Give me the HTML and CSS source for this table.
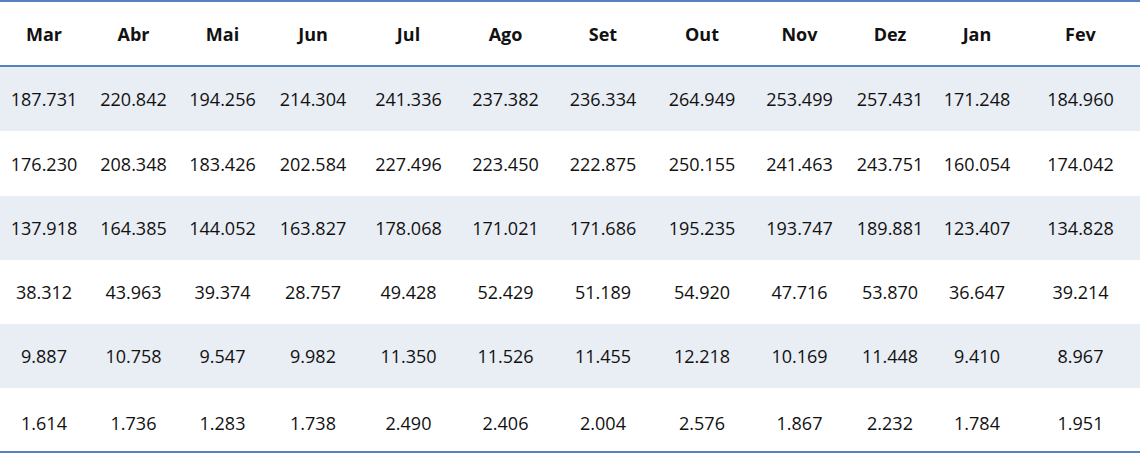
FILE: index.html
```html
<!DOCTYPE html>
<html lang="pt">
<head>
<meta charset="utf-8">
<link rel="stylesheet" href="styles.css">
</head>
<body>
<table class="data">
  <colgroup>
    <col class="c1"><col class="c2"><col class="c3"><col class="c4"><col class="c5"><col class="c6">
    <col class="c7"><col class="c8"><col class="c9"><col class="c10"><col class="c11"><col class="c12">
  </colgroup>
  <thead>
    <tr><th>Mar</th><th>Abr</th><th>Mai</th><th>Jun</th><th>Jul</th><th>Ago</th><th>Set</th><th>Out</th><th>Nov</th><th>Dez</th><th>Jan</th><th>Fev</th></tr>
  </thead>
  <tbody>
    <tr class="band"><td>187.731</td><td>220.842</td><td>194.256</td><td>214.304</td><td>241.336</td><td>237.382</td><td>236.334</td><td>264.949</td><td>253.499</td><td>257.431</td><td>171.248</td><td>184.960</td></tr>
    <tr class="tall"><td>176.230</td><td>208.348</td><td>183.426</td><td>202.584</td><td>227.496</td><td>223.450</td><td>222.875</td><td>250.155</td><td>241.463</td><td>243.751</td><td>160.054</td><td>174.042</td></tr>
    <tr class="band"><td>137.918</td><td>164.385</td><td>144.052</td><td>163.827</td><td>178.068</td><td>171.021</td><td>171.686</td><td>195.235</td><td>193.747</td><td>189.881</td><td>123.407</td><td>134.828</td></tr>
    <tr><td>38.312</td><td>43.963</td><td>39.374</td><td>28.757</td><td>49.428</td><td>52.429</td><td>51.189</td><td>54.920</td><td>47.716</td><td>53.870</td><td>36.647</td><td>39.214</td></tr>
    <tr class="band"><td>9.887</td><td>10.758</td><td>9.547</td><td>9.982</td><td>11.350</td><td>11.526</td><td>11.455</td><td>12.218</td><td>10.169</td><td>11.448</td><td>9.410</td><td>8.967</td></tr>
    <tr class="last"><td>1.614</td><td>1.736</td><td>1.283</td><td>1.738</td><td>2.490</td><td>2.406</td><td>2.004</td><td>2.576</td><td>1.867</td><td>2.232</td><td>1.784</td><td>1.951</td></tr>
  </tbody>
</table>
</body>
</html>
```
FILE: styles.css
```css
html, body {
  margin: 0;
  padding: 0;
  background: #ffffff;
}
.data {
  width: 1140px;
  border-collapse: collapse;
  table-layout: fixed;
  font-family: "Open Sans", "Liberation Sans", sans-serif;
  color: #111111;
  border-top: 2px solid #5683c0;
  border-bottom: 2px solid #5683c0;
}
.c1 { width: 88px; }
.c2 { width: 91px; }
.c3 { width: 87px; }
.c4 { width: 94px; }
.c5 { width: 97px; }
.c6 { width: 97px; }
.c7 { width: 98px; }
.c8 { width: 100px; }
.c9 { width: 95px; }
.c10 { width: 86px; }
.c11 { width: 88px; }
.c12 { width: 119px; }
.data th,
.data td {
  padding: 0;
  text-align: center;
  white-space: nowrap;
}
.data th {
  height: 63px;
  font-size: 18px;
  font-weight: 700;
  border-bottom: 2px solid #5683c0;
}
.data td {
  height: 64px;
  font-size: 18px;
  font-weight: 400;
}
.data .tall td {
  height: 64px;
  padding-top: 1px;
}
.data .last td {
  height: 57px;
  padding-top: 6px;
}
.band td {
  background: #e9edf4;
}
```
